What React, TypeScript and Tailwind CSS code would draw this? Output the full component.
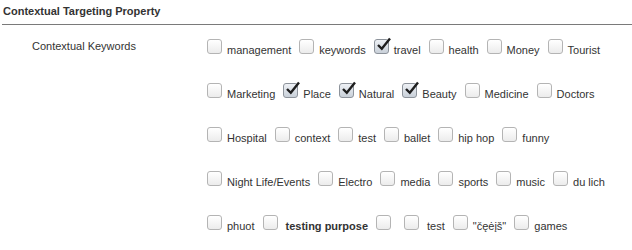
import React from 'react';

type Item = { label: string; checked?: boolean; bold?: boolean; wide?: boolean };

const rows: Item[][] = [
  [
    { label: 'management' },
    { label: 'keywords' },
    { label: 'travel', checked: true },
    { label: 'health' },
    { label: 'Money' },
    { label: 'Tourist' },
  ],
  [
    { label: 'Marketing' },
    { label: 'Place', checked: true },
    { label: 'Natural', checked: true },
    { label: 'Beauty', checked: true },
    { label: 'Medicine' },
    { label: 'Doctors' },
  ],
  [
    { label: 'Hospital' },
    { label: 'context' },
    { label: 'test' },
    { label: 'ballet' },
    { label: 'hip hop' },
    { label: 'funny' },
  ],
  [
    { label: 'Night Life/Events' },
    { label: 'Electro' },
    { label: 'media' },
    { label: 'sports' },
    { label: 'music' },
    { label: 'du lich' },
  ],
  [
    { label: 'phuot' },
    { label: 'testing purpose', bold: true, wide: true },
    { label: '' },
    { label: 'test', wide: true },
    { label: '"čęėįš"' },
    { label: 'games' },
  ],
];

function Box({ checked }: { checked?: boolean }) {
  return (
    <span
      className={`relative ml-[4px] mr-[2px] w-[15px] h-[15px] shrink-0 rounded-[3px] border ${
        checked
          ? 'border-[#8d939b] bg-gradient-to-b from-[#eef1f5] to-[#c9d0d9]'
          : 'border-[#b4b4b4] bg-gradient-to-b from-white to-[#ececec]'
      }`}
    >
      {checked && (
        <svg className="absolute left-[1px] top-[-3px]" width="16" height="15" viewBox="0 0 16 15">
          <path d="M2 8 L5.8 11.8 L14 1.5" fill="none" stroke="#1e1e1e" strokeWidth="2.4" />
        </svg>
      )}
    </span>
  );
}

export default function App() {
  return (
    <div className="w-[632px] h-[250px] bg-white text-[#333] text-[11px] font-['Liberation_Sans',Arial,sans-serif] overflow-hidden">
      {/* Section header */}
      <div className="pl-[3px] pt-[5px] leading-[13px] font-bold">Contextual Targeting Property</div>
      <div className="ml-[2px] mt-[6px] h-[1px] bg-[#7a7a7a]" />

      <div className="flex">
        <div className="w-[203px] shrink-0 pl-[32px] pt-[14px] leading-[14px]">Contextual Keywords</div>

        <div className="flex-1 pt-[14px] leading-[14px]">
          {rows.map((row, i) => (
            <div key={i} className="flex items-baseline h-[44px]">
              {row.map((item, j) => (
                <div key={j} className="flex items-baseline mr-[4px]">
                  <Box checked={item.checked} />
                  <span className={`${item.wide ? 'pl-[6px]' : 'pl-[3px]'} ${item.bold ? 'font-bold' : ''} whitespace-nowrap`}>
                    {item.label}
                  </span>
                </div>
              ))}
            </div>
          ))}
        </div>
      </div>
    </div>
  );
}
